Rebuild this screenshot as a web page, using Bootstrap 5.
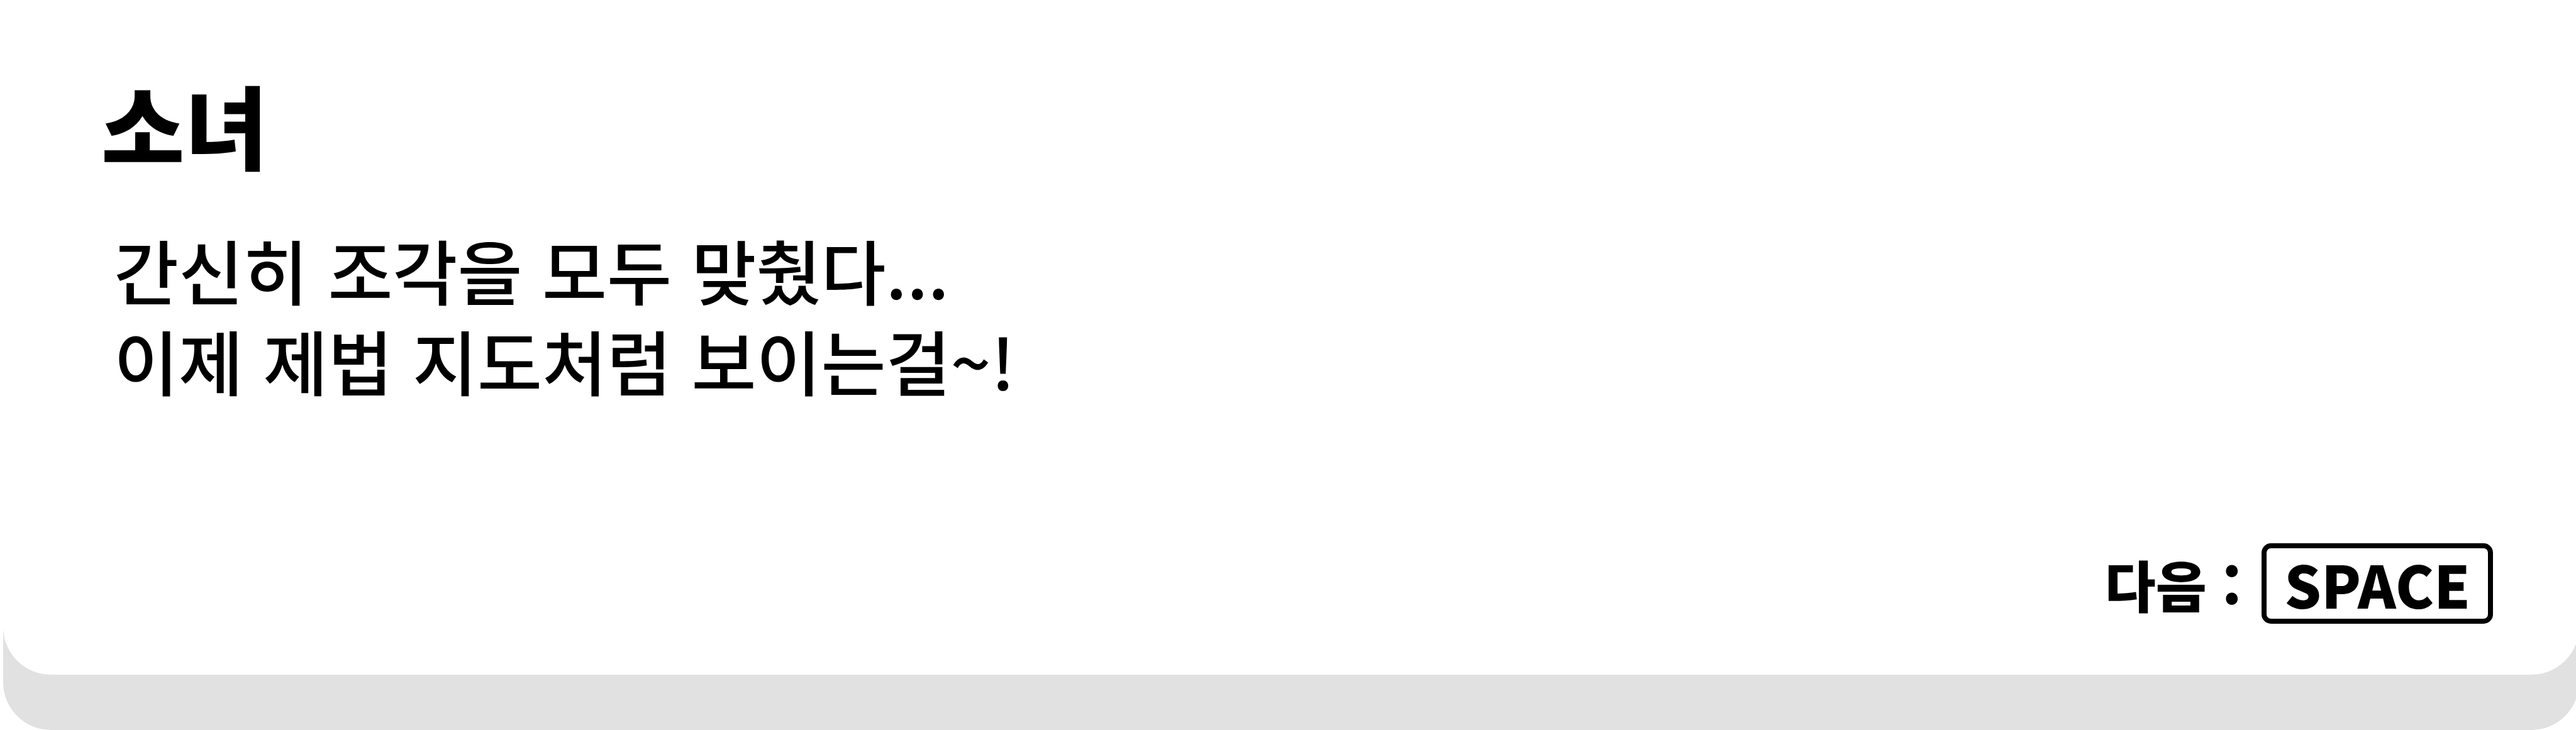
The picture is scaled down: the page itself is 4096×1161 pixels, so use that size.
<!DOCTYPE html>
<html lang="ko">
<head>
<meta charset="utf-8">
<meta name="viewport" content="width=device-width, initial-scale=1">
<title>소녀</title>
<link href="https://cdn.jsdelivr.net/npm/bootstrap@5.3.0/dist/css/bootstrap.min.css" rel="stylesheet">
<style>
  body { background: #fff; color: #000; font-family: "Noto Sans CJK KR", sans-serif; }
  .dialogue-base {
    width: 100vw;
    margin-left: 5px;
    padding-bottom: 88px;
    background: #e1e1e1;
    border-radius: 0 0 76px 76px;
  }
  .dialogue {
    padding: 121px 137px 81px 156px;
    border-radius: 0 0 76px 76px;
  }
  .speaker { font-size: 144px; line-height: 150px; font-weight: 900; margin-bottom: 85px; }
  .speech { font-size: 112px; line-height: 144px; font-weight: 500; padding-left: 20px; }
  .next-row { font-size: 92px; line-height: 112px; font-weight: 900; gap: 32px; }
  .next-label { font-size: 88px; }
  .key {
    font: inherit; color: #000; background: #fff;
    border: 8px solid #000; border-radius: 15px;
    padding: 0 28px;
  }
</style>
</head>
<body class="overflow-hidden">
<div class="dialogue-base min-vh-100 d-flex flex-column">
  <main class="dialogue bg-white d-flex flex-column flex-grow-1">
    <h1 class="speaker">소녀</h1>
    <p class="speech mb-0">간신히 조각을 모두 맞췄다...<br>이제 제법 지도처럼 보이는걸~!</p>
    <div class="next-row d-flex justify-content-end align-items-center mt-auto">
      <label class="next-label" for="next">다음 :</label>
      <button id="next" type="button" class="key">SPACE</button>
    </div>
  </main>
</div>
<script src="https://cdn.jsdelivr.net/npm/bootstrap@5.3.0/dist/js/bootstrap.bundle.min.js"></script>
</body>
</html>
